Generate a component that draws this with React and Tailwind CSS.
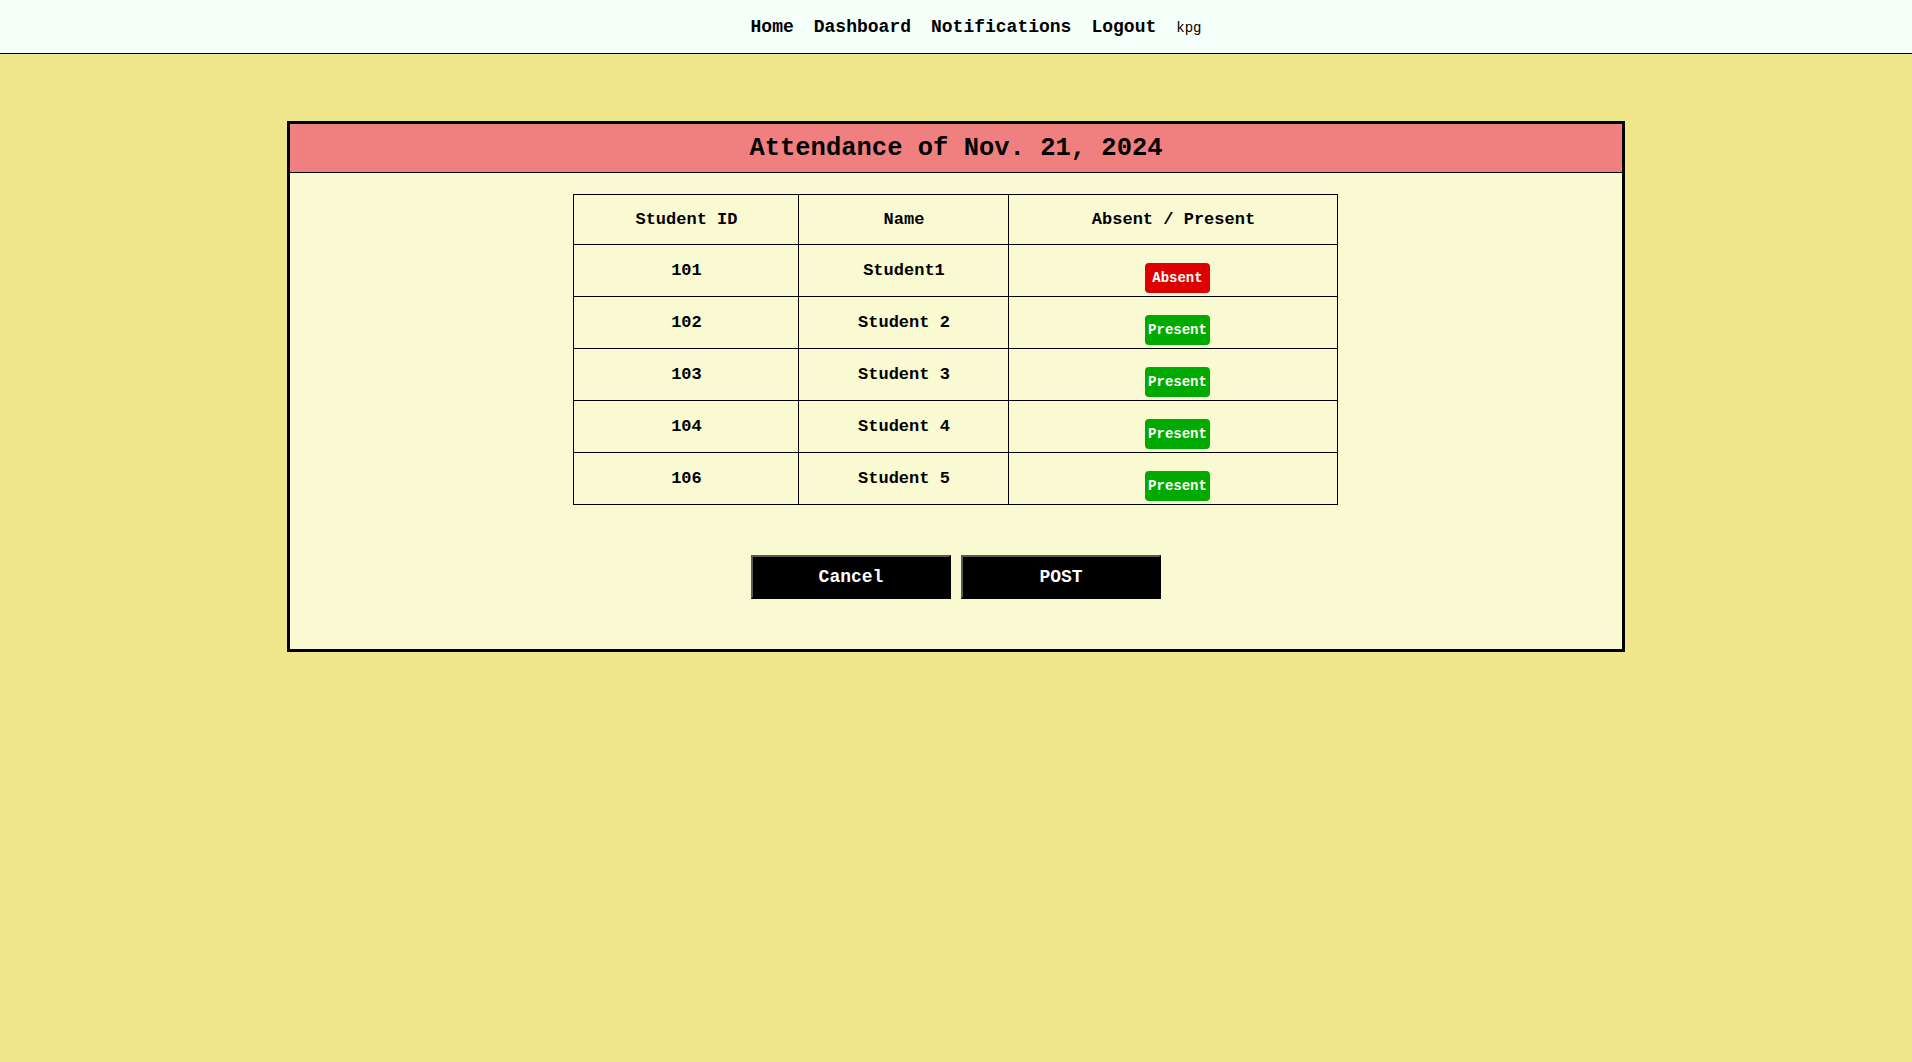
const students = [
  { id: '101', name: 'Student1', present: false },
  { id: '102', name: 'Student 2', present: true },
  { id: '103', name: 'Student 3', present: true },
  { id: '104', name: 'Student 4', present: true },
  { id: '106', name: 'Student 5', present: true },
];

const mono = "font-['Courier_New','Liberation_Mono',monospace]";

export default function App() {
  return (
    <div className={`min-h-screen bg-[#f0e68c] text-black ${mono}`}>
      <nav className="h-[54px] bg-[#f5fffa] border-b border-black flex justify-center items-center">
        <ul className="flex items-center gap-5 pl-10 pt-[2px]">
          <li className="text-[18px] font-bold">Home</li>
          <li className="text-[18px] font-bold">Dashboard</li>
          <li className="text-[18px] font-bold">Notifications</li>
          <li className="text-[18px] font-bold">Logout</li>
          <li className="text-[14px] pt-[2px]">kpg</li>
        </ul>
      </nav>

      <div className="w-[70%] mx-auto mt-[67px] border-[3px] border-black bg-[#fafad2]">
        <div className="h-[49px] bg-[#f08080] border-b border-black flex items-center justify-center pt-[3px]">
          <h2 className="text-[25.5px] font-bold">Attendance of Nov. 21, 2024</h2>
        </div>

        <table className="table-fixed border-collapse w-[764px] mx-auto mt-[21px]">
          <thead>
            <tr>
              <th className="w-[225px] h-[50px] border border-black text-[17px] font-bold">Student ID</th>
              <th className="w-[210px] h-[50px] border border-black text-[17px] font-bold">Name</th>
              <th className="w-[329px] h-[50px] border border-black text-[17px] font-bold">Absent / Present</th>
            </tr>
          </thead>
          <tbody>
            {students.map((s) => (
              <tr key={s.id}>
                <td className="h-[52px] border border-black text-center text-[17px] font-bold">{s.id}</td>
                <td className="h-[52px] border border-black text-center text-[17px] font-bold">{s.name}</td>
                <td className="h-[52px] border border-black align-top pt-[18px]">
                  <div className="flex justify-center pl-2">
                    <button
                      className={`w-[65px] h-[30px] rounded-[4px] text-white text-[14px] font-bold ${
                        s.present ? 'bg-[#00aa00]' : 'bg-[#dd0000]'
                      }`}
                    >
                      {s.present ? 'Present' : 'Absent'}
                    </button>
                  </div>
                </td>
              </tr>
            ))}
          </tbody>
        </table>

        <div className="flex justify-center gap-[10px] mt-[50px] pb-[50px]">
          <button className="w-[200px] h-[44px] bg-black text-white text-[18px] font-bold border-2 border-t-[#5a5a52] border-l-[#5a5a52] border-r-black border-b-black">
            Cancel
          </button>
          <button className="w-[200px] h-[44px] bg-black text-white text-[18px] font-bold border-2 border-t-[#5a5a52] border-l-[#5a5a52] border-r-black border-b-black">
            POST
          </button>
        </div>
      </div>
    </div>
  );
}
